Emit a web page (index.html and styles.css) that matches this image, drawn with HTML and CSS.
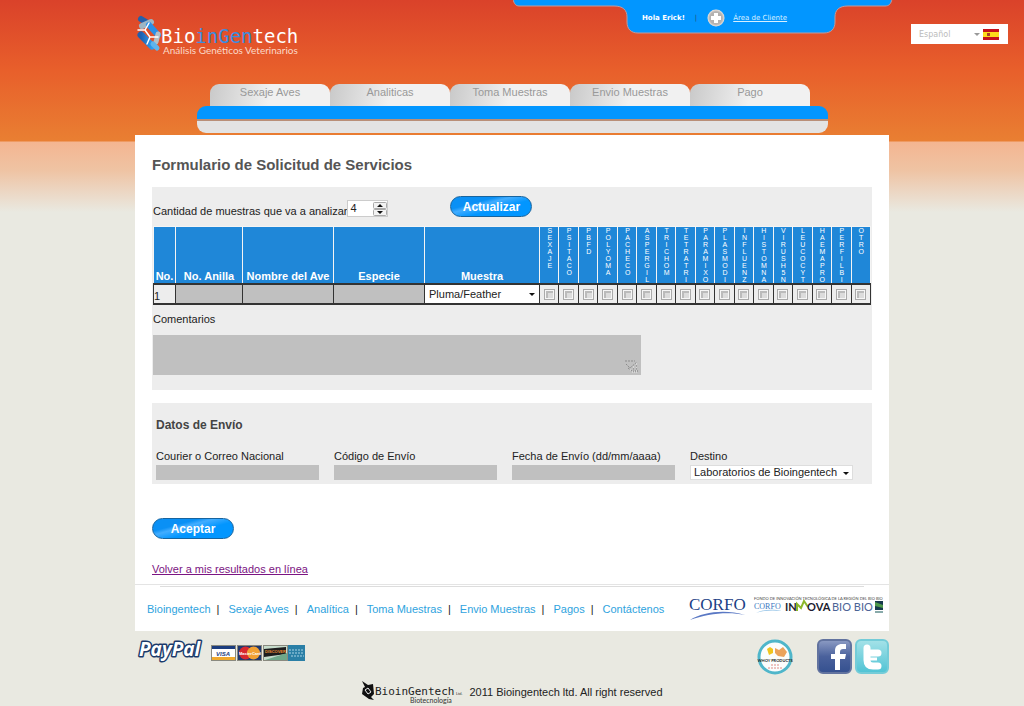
FILE: index.html
```html
<!DOCTYPE html>
<html lang="es">
<head>
<meta charset="utf-8">
<title>Bioingentech - Formulario de Solicitud de Servicios</title>
<meta name="viewport" content="width=device-width, initial-scale=1">
<link rel="stylesheet" href="styles.css">
</head>
<body>
<header class="top">
  <div class="top-main">
    <div class="brand-row">
      <a class="brand" href="#" aria-label="BioinGentech Análisis Genéticos Veterinarios">
        <svg width="170" height="44" viewBox="0 0 170 44">
          <defs>
            <linearGradient id="dna" x1="0" y1="0" x2="1" y2="0"><stop offset="0" stop-color="#1d5fb0"/><stop offset="1" stop-color="#2f9cf0"/></linearGradient>
          </defs>
          <g stroke-linecap="round" fill="none">
            <path d="M5 4L10 7" stroke="#2560aa" stroke-width="6"/>
            <path d="M6 11L15 7" stroke="#9db6c4" stroke-width="6"/>
            <path d="M13 10L22 20" stroke="#2b8fe6" stroke-width="6"/>
            <path d="M5 20L16 31" stroke="url(#dna)" stroke-width="7"/>
            <path d="M20 27L22 19" stroke="#b3bfc8" stroke-width="5"/>
            <path d="M17 29L21 33" stroke="#5fb4ee" stroke-width="5"/>
            <path d="M2 15H9L13 8M9 15L14 22H22M14 22L11 29" stroke="#fff" stroke-width="1.500"/>
          </g>
          <text class="brand-name" x="25" y="28" fill="#fff">Bio<tspan fill="#3a8de0">inGen</tspan>tech</text>
          <text class="brand-sub" x="27" y="39" fill="#fbd9c8">Análisis Genéticos Veterinarios</text>
        </svg>
      </a>
      <div class="user">
        <svg class="user-shape" width="380" height="36" viewBox="0 0 380 36" aria-hidden="true">
          <path d="M0 -1C1 4 3 6 6 6H101C110 6 114 10 114 17V22C114 29 118 33 125 33H311C318 33 322 29 322 22V17C322 10 326 6 335 6H372C376 6 378 4 379 -1Z" fill="#0296ff" stroke="#c29a9b" stroke-width="1"/>
        </svg>
        <strong>Hola Erick!</strong>
        <span class="user-sep">|</span>
        <svg width="18" height="18" viewBox="0 0 18 18" aria-hidden="true">
          <defs><radialGradient id="silver"><stop offset="0" stop-color="#a8a8a8"/><stop offset=".75" stop-color="#b7b4b2"/><stop offset="1" stop-color="#eee6e0"/></radialGradient></defs>
          <circle cx="9" cy="9" r="8.500" fill="url(#silver)"/>
          <path d="M9 4V14M4 9H14" stroke="#fff" stroke-width="4"/>
        </svg>
        <a href="#">Área de Cliente</a>
      </div>
    </div>
    <nav class="tabs" aria-label="Principal">
      <a href="#">Sexaje Aves</a>
      <a href="#">Analiticas</a>
      <a href="#">Toma Muestras</a>
      <a href="#">Envio Muestras</a>
      <a href="#">Pago</a>
    </nav>
    <div class="ribbon"></div>
  </div>
  <div class="lang">
    <div class="pick">
      <select aria-label="Idioma"><option>Español</option></select>
    </div>
    <svg width="16" height="11" viewBox="0 0 16 11" aria-hidden="true">
      <rect width="16" height="11" fill="#c4111b"/><rect y="3" width="16" height="5" fill="#fddc1a"/>
      <rect x="4" y="4" width="3" height="3" fill="#a8402a"/>
    </svg>
  </div>
</header>

<main class="sheet">
  <form class="content">
    <h1>Formulario de Solicitud de Servicios</h1>

    <section class="panel samples">
      <div class="count">
        <label for="cantidad">Cantidad de muestras que va a analizar</label>
        <div class="stepper">
          <input id="cantidad" type="number" value="4">
          <svg width="14" height="14" viewBox="0 0 14 14" aria-hidden="true">
            <rect x=".5" y=".5" width="13" height="6" rx="1" fill="#f3f3f3" stroke="#aaa"/>
            <rect x=".5" y="7.500" width="13" height="6" rx="1" fill="#f3f3f3" stroke="#aaa"/>
            <path d="M4 5H10L7 2ZM4 9H10L7 12Z" fill="#111"/>
          </svg>
        </div>
        <button class="pill" type="button">Actualizar</button>
      </div>

      <table class="grid">
        <colgroup>
          <col class="c-no"><col class="c-ring"><col class="c-name"><col class="c-name"><col class="c-sample">
          <col span="17">
        </colgroup>
        <thead>
          <tr>
            <th>No.</th><th>No. Anilla</th><th>Nombre del Ave</th><th>Especie</th><th>Muestra</th>
            <th class="v"><span>SEXAJE</span></th><th class="v"><span>PSITACO</span></th><th class="v"><span>PBFD</span></th><th class="v"><span>POLYOMA</span></th><th class="v"><span>PACHECO</span></th><th class="v"><span>ASPERGIL</span></th><th class="v"><span>TRICHOM</span></th><th class="v"><span>TETRATRI</span></th><th class="v"><span>PARAMIXO</span></th><th class="v"><span>PLASMODI</span></th><th class="v"><span>INFLUENZ</span></th><th class="v"><span>HISTOMNA</span></th><th class="v"><span>VIRUSH5N</span></th><th class="v"><span>LEUCOCYT</span></th><th class="v"><span>HAEMAPRO</span></th><th class="v"><span>PERFILBI</span></th><th class="v"><span>OTRO</span></th>
          </tr>
        </thead>
        <tbody>
          <tr>
            <td class="num">1</td>
            <td class="field"><input type="text" aria-label="No. Anilla"></td>
            <td class="field"><input type="text" aria-label="Nombre del Ave"></td>
            <td class="field"><input type="text" aria-label="Especie"></td>
            <td class="field"><div class="pick"><select aria-label="Muestra"><option>Pluma/Feather</option></select></div></td>
            <td><input type="checkbox" aria-label="Sexaje"></td>
            <td><input type="checkbox" aria-label="Psitaco"></td>
            <td><input type="checkbox" aria-label="PBFD"></td>
            <td><input type="checkbox" aria-label="Polyoma"></td>
            <td><input type="checkbox" aria-label="Pacheco"></td>
            <td><input type="checkbox" aria-label="Aspergil"></td>
            <td><input type="checkbox" aria-label="Trichom"></td>
            <td><input type="checkbox" aria-label="Tetratri"></td>
            <td><input type="checkbox" aria-label="Paramixo"></td>
            <td><input type="checkbox" aria-label="Plasmodi"></td>
            <td><input type="checkbox" aria-label="Influenz"></td>
            <td><input type="checkbox" aria-label="Histomna"></td>
            <td><input type="checkbox" aria-label="Virush5n"></td>
            <td><input type="checkbox" aria-label="Leucocyt"></td>
            <td><input type="checkbox" aria-label="Haemapro"></td>
            <td><input type="checkbox" aria-label="Perfilbi"></td>
            <td><input type="checkbox" aria-label="Otro"></td>
          </tr>
        </tbody>
      </table>

      <div class="comments">
        <label for="comentarios">Comentarios</label>
        <div class="comment-box">
          <textarea id="comentarios"></textarea>
          <svg width="15" height="14" viewBox="0 0 15 14" aria-hidden="true">
            <path d="M1 2H11M2 5L6 9L13 3M4 9L8 12" stroke="#8b8b8b" stroke-dasharray="2 1" fill="none"/>
            <path d="M12 5h2M9 8h2M12 8h2M6 11h2M9 11h2M12 11h2M8 13h6" stroke="#eee" stroke-dasharray="1 1"/>
            <path d="M12 7h2M9 10h2M12 10h2M9 12h5" stroke="#777" stroke-dasharray="1 1"/>
          </svg>
        </div>
      </div>
    </section>

    <section class="panel shipping">
      <h2>Datos de Envío</h2>
      <div class="fields">
        <div><label for="courier">Courier o Correo Nacional</label><input id="courier" type="text"></div>
        <div><label for="codigo">Código de Envío</label><input id="codigo" type="text"></div>
        <div><label for="fecha">Fecha de Envío (dd/mm/aaaa)</label><input id="fecha" type="text"></div>
        <div><label for="destino">Destino</label><div class="pick"><select id="destino"><option>Laboratorios de Bioingentech</option></select></div></div>
      </div>
    </section>

    <button class="pill" type="submit">Aceptar</button>
    <a class="back" href="#">Volver a mis resultados en línea</a>
  </form>

  <div class="links">
    <nav aria-label="Pie">
      <a href="#">Bioingentech</a><a href="#">Sexaje Aves</a><a href="#">Analítica</a><a href="#">Toma Muestras</a><a href="#">Envio Muestras</a><a href="#">Pagos</a><a href="#">Contáctenos</a>
    </nav>
    <svg width="58" height="26" viewBox="0 0 58 26" role="img" aria-label="CORFO">
      <text class="corfo" x="0" y="15" fill="#1c3f86">CORFO</text>
      <path d="M1 25C14 17 36 14 56 20C38 16 18 19 1 25Z" fill="#5a78c4"/>
    </svg>
    <svg width="130" height="26" viewBox="0 0 130 26" role="img" aria-label="Corfo Innova Bio Bio">
      <text class="micro" x="0" y="5" fill="#444">FONDO DE INNOVACIÓN TECNOLÓGICA DE LA REGIÓN DEL BIO BIO</text>
      <text class="corfo-s" x="0" y="14" fill="#3b78c0">CORFO</text>
      <path d="M2 18C10 14 20 14 28 16C20 15 10 15 2 18Z" fill="#8fc0e6"/>
      <text class="innova" x="31" y="16" fill="#1c1c30">IN</text>
      <path d="M43 16V9L47 13L50 6L54 12" fill="none" stroke="#8cb82b" stroke-width="2"/>
      <text class="innova" x="53" y="16" fill="#1c1c30">OVA</text>
      <text class="biobio" x="78" y="16" fill="#4c6496">BIO BIO</text>
      <rect x="121" y="6" width="8" height="9" fill="#173a4c"/><path d="M121 7L129 10V13L121 11Z" fill="#4f9a4c"/><rect x="121" y="16" width="8" height="2" fill="#8aa"/>
    </svg>
  </div>
</main>

<footer class="foot">
  <div class="badges">
    <svg width="170" height="24" viewBox="0 0 170 24" role="img" aria-label="PayPal, Visa, MasterCard, Discover, American Express">
      <text class="paypal" x="2" y="17" fill="#fff" stroke="#1b3a6b" stroke-width="3" paint-order="stroke" stroke-linejoin="round">PayPal</text>
      <g transform="translate(74 6)">
        <rect x=".5" y=".5" width="24" height="15" fill="#fff" stroke="#8a8a80"/><rect x="1" y="1" width="23" height="3" fill="#1c3d7e"/><rect x="1" y="12" width="23" height="3" fill="#f0a92d"/><text class="card" x="5" y="11" fill="#1c3d7e">VISA</text>
      </g>
      <g transform="translate(100 6)">
        <rect x=".5" y=".5" width="24" height="15" fill="#20386f" stroke="#8a8a80"/><circle cx="8.500" cy="8" r="6.500" fill="#d8282f"/><circle cx="16.500" cy="8" r="6.500" fill="#f2a134"/><text class="card-s" x="2" y="10" fill="#fff">MasterCard</text>
      </g>
      <g transform="translate(126 6)">
        <rect x=".5" y=".5" width="24" height="15" fill="#c6dccb" stroke="#8a8a80"/><path d="M1 4L23 2V9L1 12Z" fill="#1d1d1d"/><path d="M2 15L24 8V15Z" fill="#6fa88a"/><text class="card-s" x="2" y="8" fill="#f0933a">DISCOVER</text>
      </g>
      <g transform="translate(151 6)">
        <rect width="17" height="16" fill="#2a7fa6"/><path d="M1 5H16M1 8H15M3 11H16" stroke="#a8d4e6" stroke-dasharray="2 1"/>
      </g>
    </svg>
    <div class="social">
      <svg width="36" height="36" viewBox="0 0 36 36" role="img" aria-label="Whoy Products">
        <circle cx="18" cy="18" r="16" fill="#fbfdfd" stroke="#4fb6ca" stroke-width="3"/>
        <path d="M10 10l3-2 3 2 0 4-4 2-1-3z" fill="#f0c51f"/><path d="M18 9l4 2 4-3 4 5-3 5-6-1-3-3z" fill="#eba35c"/>
        <text class="round" x="18" y="23" text-anchor="middle" fill="#222">WHOY PRODUCTS</text>
        <path d="M14 26H22M11 29H26" stroke="#e08a83" stroke-dasharray="2 1"/>
      </svg>
      <a href="#" aria-label="Facebook"><svg width="35" height="35" viewBox="0 0 35 35">
        <defs><linearGradient id="fb" x1="0" y1="0" x2="0" y2="1"><stop offset="0" stop-color="#8d9cc4"/><stop offset=".5" stop-color="#4a619c"/><stop offset="1" stop-color="#34508f"/></linearGradient></defs>
        <rect x="1" y="1" width="33" height="33" rx="5" fill="url(#fb)" stroke="#62739f" stroke-width="2"/>
        <path d="M18 31V20H14V15H18V12C18 7 21 5 25 5H29V10H26C24 10 23 11 23 13V15H29L28 20H23V31Z" fill="#fff"/>
      </svg></a>
      <a href="#" aria-label="Twitter"><svg width="34" height="35" viewBox="0 0 34 35">
        <defs><linearGradient id="tw" x1="0" y1="0" x2="0" y2="1"><stop offset="0" stop-color="#a5e2e8"/><stop offset="1" stop-color="#4fc3d4"/></linearGradient></defs>
        <rect x="1" y="1" width="32" height="33" rx="5" fill="url(#tw)" stroke="#74ccd8" stroke-width="2"/>
        <path d="M12 9V21Q12 27 18 27H23M12 14H23" fill="none" stroke="#fff" stroke-width="7" stroke-linecap="round" stroke-linejoin="round"/>
        <path d="M14 20H22" stroke="#fff" stroke-width="3"/>
      </svg></a>
    </div>
  </div>
  <div class="copy">
    <svg width="105" height="24" viewBox="0 0 105 24" role="img" aria-label="BioinGentech Ltd. Biotecnología">
      <path d="M1 1L7 5L12 4L13 14L10 17L13 20L8 19L1 14L2 8L4 7Z" fill="#111"/>
      <path d="M4 10L7 8L10 12L7 14Z" fill="none" stroke="#eee"/>
      <text class="copy-name" x="14" y="15" fill="#222">BioinGentech</text>
      <text class="micro" x="95" y="15" fill="#333">Ltd.</text>
      <text class="copy-sub" x="49" y="23" fill="#333">Biotecnología</text>
    </svg>
    <span>2011 Bioingentech ltd. All right reserved</span>
  </div>
</footer>
</body>
</html>
```
FILE: styles.css
```css
* { box-sizing: border-box; }

body {
  margin: 0;
  font: 11px/13px "Liberation Sans", Arial, sans-serif;
  color: #222;
  background: #e9e9e1 linear-gradient(#da422a 0, #e85f2b 70px, #e97f32 141px, #f4b591 142px, #efc3a3 170px, #e9e9e1 212px) no-repeat;
}

button, input, select, textarea { font: inherit; color: inherit; margin: 0; }

.top {
  display: grid;
  grid-template-columns: 1fr minmax(0, 754px) 1fr;
}
.top-main { grid-column: 2; }
.brand-row {
  display: flex;
  justify-content: space-between;
  align-items: flex-start;
  height: 84px;
}
.brand { margin: 15px 0 0 1px; }
.brand svg, .foot svg, .links svg { display: block; overflow: visible; }
.brand-name { font: 19px "DejaVu Sans Mono", monospace; }
.brand-sub { font: 10px Lato, sans-serif; }

.user {
  position: relative;
  display: flex;
  align-items: center;
  gap: 8px;
  width: 378px;
  height: 36px;
  margin-right: -2px;
  padding-left: 129px;
  color: #fff;
  font: 7px/12px "DejaVu Sans", sans-serif;
}
.user > * { position: relative; }
.user .user-shape { position: absolute; left: 0; top: 0; }
.user-sep { color: #24507a; margin: 0 2px; }
.user a { color: #d6efff; }

.tabs {
  display: flex;
  margin: 0 79px 0 75px;
}
.tabs a {
  flex: 1;
  height: 22px;
  padding-top: 2px;
  text-align: center;
  text-decoration: none;
  color: #999;
  border-radius: 9px 9px 0 0;
  background: linear-gradient(100deg, #c9c9c9, #f1f1f1 50%);
}
.ribbon {
  height: 27px;
  margin: 0 61px 2px 62px;
  border-radius: 9px;
  background: linear-gradient(#0296ff 13px, #b98f78 13px, #b98f78 15px, #e3e3e3 15px);
}

.lang {
  display: flex;
  align-items: center;
  justify-self: end;
  align-self: start;
  gap: 3px;
  width: 97px;
  height: 20px;
  margin: 24px 16px 0 0;
  padding: 0 9px 0 8px;
  background: #fff;
}
.lang .pick { flex: 1; }
.lang .pick select { color: #bbb; font: 8px "DejaVu Sans", sans-serif; padding: 0; }
.lang .pick::after { right: 0; border-top-color: #999; }

/* Drop-down with a drawn arrow */
.pick { position: relative; }
.pick select {
  appearance: none;
  display: block;
  width: 100%;
  border: 0;
  border-radius: 0;
  background: #fff;
  padding: 0 4px;
}
.pick::after {
  content: "";
  position: absolute;
  right: 4px;
  top: calc(50% - 1px);
  border: 3px solid transparent;
  border-top-color: #111;
  border-bottom: 0;
  pointer-events: none;
}

.sheet {
  max-width: 754px;
  margin: 0 auto;
  background: #fff;
}
.content {
  display: flex;
  flex-direction: column;
  align-items: flex-start;
  padding: 20px 17px 8px;
}
h1 { margin: 0 0 12px; font-size: 15px; line-height: 20px; color: #555; }
h2 { margin: 0; font-size: 12px; line-height: 16px; color: #444; }

.panel { align-self: stretch; background: #ededed; }
.samples { padding: 9px 1px 15px; margin-bottom: 13px; }

.count { display: flex; align-items: center; height: 30px; }
.stepper { position: relative; margin-bottom: 6px; }
.stepper input {
  appearance: textfield;
  display: block;
  width: 41px;
  height: 17px;
  padding: 0 16px 0 2px;
  border: 1px solid #ccc;
  background: #fff;
}
.stepper input::-webkit-inner-spin-button { appearance: none; margin: 0; }
.stepper svg { position: absolute; right: 1px; top: 2px; }

.pill {
  width: 82px;
  height: 21px;
  padding: 2px 0 0;
  border: 1px solid #17649f;
  border-radius: 11px;
  background: linear-gradient(165deg, #0a90f5 30%, #43adff 40%, #0296ff 60%);
  color: #fff;
  font-size: 12px;
  font-weight: bold;
}
.count .pill { align-self: flex-start; margin-left: 62px; }

.grid {
  width: 100%;
  table-layout: fixed;
  border-collapse: collapse;
}
.c-no { width: 22px; }
.c-ring { width: 67px; }
.c-name { width: 91px; }
.c-sample { width: 115px; }
.grid th {
  height: 57px;
  padding: 0;
  vertical-align: bottom;
  color: #fff;
  background: #1f87d8;
  border: 1px solid #f4f4f4;
  white-space: nowrap;
}
.grid th.v { vertical-align: top; font: 7px/8px "Liberation Sans", Arial, sans-serif; }
.v span { display: block; width: 8px; margin: 0 auto; writing-mode: vertical-rl; text-orientation: upright; }
.grid td {
  height: 20px;
  padding: 0;
  text-align: center;
  border: 1px solid #333;
  border-width: 2px 1px;
  background: #ededed;
}
.grid .num { text-align: left; vertical-align: bottom; }
.grid .field input { display: block; width: 100%; height: 18px; }
.grid .field select { height: 18px; }
.grid input[type="checkbox"] {
  appearance: none;
  display: block;
  width: 11px;
  height: 11px;
  margin: 0 auto;
  border: 1px solid #aaa;
  background: #dcdcdc;
  box-shadow: inset 0 0 0 1px #f6f6f6, inset 2px 2px 0 1px #bbb;
}
input[type="text"], textarea { border: 0; border-radius: 0; background: #c0c0c0; }

.comments { padding-top: 8px; }
.comment-box { position: relative; width: 68%; margin-top: 9px; }
.comment-box textarea { display: block; width: 100%; height: 40px; resize: none; }
.comment-box svg { position: absolute; right: 2px; bottom: 2px; }

.shipping { padding: 14px 19px 4px 4px; margin-bottom: 34px; }
.fields {
  display: grid;
  grid-template-columns: repeat(4, minmax(0, 1fr));
  gap: 15px;
  margin-top: 17px;
}
.fields label { display: block; margin-bottom: 2px; }
.fields input { display: block; width: 100%; height: 15px; padding: 0 2px; }
.fields .pick select { height: 15px; border: 1px solid #ddd; padding: 0 3px; }

.back { margin-top: 24px; color: #7b1482; }

.links {
  display: flex;
  align-items: center;
  height: 47px;
  padding: 0 5px 0 12px;
  border-top: 1px solid #e4e4e4;
  background: linear-gradient(#ddd, #ddd) 25px 1px / calc(100% - 50px) 1px no-repeat;
}
.links nav { display: flex; flex: 1; padding-top: 3px; }
.links a { color: #2ea3de; text-decoration: none; }
.links a + a::before { content: "|"; color: #222; margin: 0 9px 0 6px; }
.links svg + svg { margin-left: 7px; }
.corfo { font: 17px "Liberation Serif", serif; }
.corfo-s { font: 8px "Liberation Serif", serif; }
.micro { font: 4px Lato, sans-serif; }
.innova { font: bold 11px Lato, sans-serif; }
.biobio { font: 11px Lato, sans-serif; }

.foot { max-width: 754px; margin: 0 auto; padding-top: 8px; }
.badges { display: flex; justify-content: space-between; padding-left: 2px; }
.social { display: flex; align-items: flex-start; gap: 3px; }
.social > svg { margin-right: 21px; }
.paypal { font: italic bold 19px "Open Sans", sans-serif; }
.card { font: italic bold 6px "Liberation Sans", sans-serif; }
.card-s { font: bold 4px "Liberation Sans", sans-serif; }
.round { font: bold 4px Lato, sans-serif; }
.copy { display: flex; justify-content: center; align-items: center; gap: 3px; margin-top: 5px; }
.copy-name { font: 11px "DejaVu Sans Mono", monospace; }
.copy-sub { font: 7px Lato, sans-serif; }
```
